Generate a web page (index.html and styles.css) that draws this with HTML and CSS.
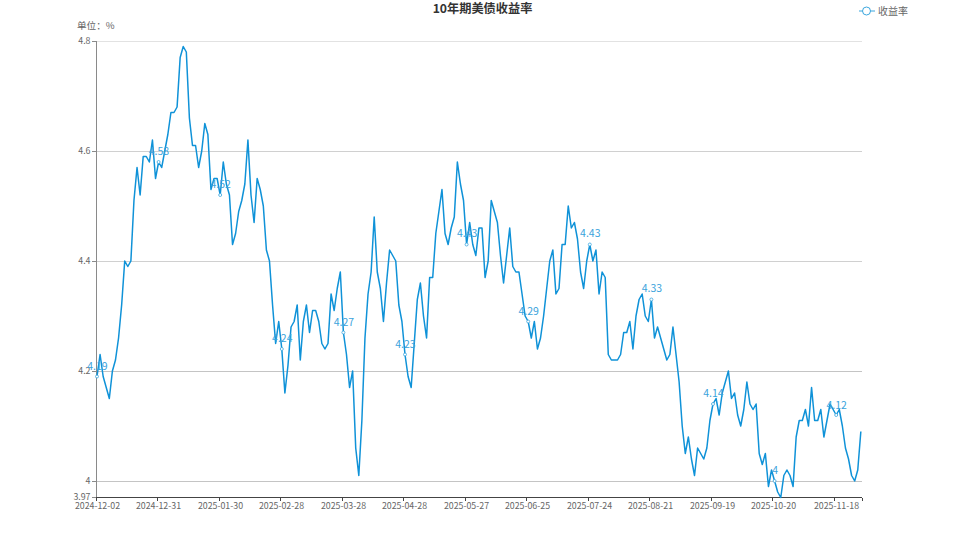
FILE: index.html
```html
<!DOCTYPE html>
<html lang="zh">
<head>
<meta charset="utf-8">
<title>10年期美债收益率</title>
<link rel="stylesheet" href="styles.css">
</head>
<body>
<main class="chart">
<svg class="plot" width="958" height="539" viewBox="0 0 958 539" xmlns="http://www.w3.org/2000/svg">
  <text class="title" x="482.5" y="13">10年期美债收益率</text>
  <text class="unit" x="77" y="28.5">单位：%</text>

  <g class="legend">
    <line class="legend-line" x1="859" y1="11" x2="875" y2="11"/>
    <circle class="legend-dot" cx="866.5" cy="11" r="4"/>
    <text class="legend-text" x="878" y="14.5">收益率</text>
  </g>

  <g class="grid">
    <line class="grid-top" x1="97" y1="41.5" x2="862" y2="41.5"/>
    <line x1="97" y1="151.5" x2="862" y2="151.5"/>
    <line x1="97" y1="261.5" x2="862" y2="261.5"/>
    <line class="grid-dark" x1="97" y1="371.5" x2="862" y2="371.5"/>
    <line class="grid-dark" x1="97" y1="481.5" x2="862" y2="481.5"/>
  </g>

  <g class="y-axis">
    <line x1="96.5" y1="41" x2="96.5" y2="498"/>
    <line x1="92" y1="41.5" x2="96" y2="41.5"/>
    <line x1="92" y1="151.5" x2="96" y2="151.5"/>
    <line x1="92" y1="261.5" x2="96" y2="261.5"/>
    <line x1="92" y1="371.5" x2="96" y2="371.5"/>
    <line x1="92" y1="481.5" x2="96" y2="481.5"/>
    <line x1="92" y1="497.5" x2="96" y2="497.5"/>
  </g>
  <g class="y-labels">
    <text x="90.5" y="44">4.8</text>
    <text x="90.5" y="154">4.6</text>
    <text x="90.5" y="264">4.4</text>
    <text x="90.5" y="374">4.2</text>
    <text x="90.5" y="484">4</text>
    <text x="90.5" y="500">3.97</text>
  </g>

  <g class="x-axis">
    <line x1="96" y1="497.5" x2="862" y2="497.5"/>
    <line x1="96.5" y1="498" x2="96.5" y2="501"/>
    <line x1="157.5" y1="498" x2="157.5" y2="501"/>
    <line x1="219.5" y1="498" x2="219.5" y2="501"/>
    <line x1="280.5" y1="498" x2="280.5" y2="501"/>
    <line x1="342.5" y1="498" x2="342.5" y2="501"/>
    <line x1="403.5" y1="498" x2="403.5" y2="501"/>
    <line x1="465.5" y1="498" x2="465.5" y2="501"/>
    <line x1="526.5" y1="498" x2="526.5" y2="501"/>
    <line x1="588.5" y1="498" x2="588.5" y2="501"/>
    <line x1="649.5" y1="498" x2="649.5" y2="501"/>
    <line x1="711.5" y1="498" x2="711.5" y2="501"/>
    <line x1="772.5" y1="498" x2="772.5" y2="501"/>
    <line x1="834.5" y1="498" x2="834.5" y2="501"/>
    <line x1="862.5" y1="498" x2="862.5" y2="501"/>
  </g>
  <g class="x-labels">
    <text x="97.5" y="509">2024-12-02</text>
    <text x="158.5" y="509">2024-12-31</text>
    <text x="220.5" y="509">2025-01-30</text>
    <text x="281.5" y="509">2025-02-28</text>
    <text x="343.5" y="509">2025-03-28</text>
    <text x="404.5" y="509">2025-04-28</text>
    <text x="466.5" y="509">2025-05-27</text>
    <text x="527.5" y="509">2025-06-25</text>
    <text x="589.5" y="509">2025-07-24</text>
    <text x="650.5" y="509">2025-08-21</text>
    <text x="712.5" y="509">2025-09-19</text>
    <text x="773.5" y="509">2025-10-20</text>
    <text x="836.5" y="509">2025-11-18</text>
  </g>

  <g transform="translate(97 2681) scale(3.08 -5.5)">
    <polyline class="series" points="0,419 1,423 2,419 3,417 4,415 5,420 6,422 7,426 8,432 9,440 10,439 11,440 12,451 13,457 14,452 15,459 16,459 17,458 18,462 19,455 20,458 21,457 22,460 23,463 24,467 25,467 26,468 27,477 28,479 29,478 30,466 31,461 32,461 33,457 34,460 35,465 36,463 37,453 38,455 39,455 40,452 41,458 42,454 43,452 44,443 45,445 46,449 47,451 48,454 49,462 50,452 51,447 52,455 53,453 54,450 55,442 56,440 57,432 58,425 59,429 60,424 61,416 62,421 63,428 64,429 65,432 66,422 67,429 68,432 69,427 70,431 71,431 72,429 73,425 74,424 75,425 76,434 77,431 78,435 79,438 80,427 81,423 82,417 83,420 84,406 85,401 86,411 87,426 88,434 89,438 90,448 91,438 92,435 93,429 94,436 95,442 96,441 97,440 98,432 99,429 100,423 101,419 102,417 103,425 104,433 105,436 106,430 107,426 108,437 109,437 110,445 111,449 112,453 113,445 114,443 115,446 116,448 117,458 118,454 119,451 120,443 121,447 122,443 123,441 124,446 125,446 126,437 127,440 128,451 129,449 130,447 131,441 132,436 133,441 134,446 135,439 136,438 137,438 138,434 139,430 140,429 141,426 142,429 143,424 144,426 145,430 146,435 147,440 148,442 149,434 150,435 151,443 152,443 153,450 154,446 155,447 156,444 157,438 158,435 159,440 160,443 161,440 162,442 163,434 164,438 165,437 166,423 167,422 168,422 169,422 170,423 171,427 172,427 173,429 174,424 175,430 176,433 177,434 178,430 179,429 180,433 181,426 182,428 183,426 184,424 185,422 186,423 187,428 188,423 189,418 190,410 191,405 192,408 193,404 194,401 195,406 196,405 197,404 198,406 199,411 200,414 201,415 202,412 203,416 204,418 205,420 206,415 207,416 208,412 209,410 210,413 211,418 212,414 213,413 214,414 215,405 216,403 217,405 218,399 219,402 220,400 221,398 222,397 223,401 224,402 225,401 226,399 227,408 228,411 229,411 230,413 231,410 232,417 233,411 234,411 235,413 236,408 237,411 238,414 239,413 240,412 241,413 242,410 243,406 244,404 245,401 246,400 247,402 248,409"/>
  </g>

  <g class="markers">
    <circle cx="97" cy="376.5" r="1.5"/>
    <circle cx="158.6" cy="162" r="1.5"/>
    <circle cx="220.2" cy="195" r="1.5"/>
    <circle cx="281.8" cy="349" r="1.5"/>
    <circle cx="343.4" cy="332.5" r="1.5"/>
    <circle cx="405" cy="354.5" r="1.5"/>
    <circle cx="466.6" cy="244.5" r="1.5"/>
    <circle cx="528.2" cy="321.5" r="1.5"/>
    <circle cx="589.8" cy="244.5" r="1.5"/>
    <circle cx="651.4" cy="299.5" r="1.5"/>
    <circle cx="713" cy="404" r="1.5"/>
    <circle cx="774.6" cy="481" r="1.5"/>
    <circle cx="836.2" cy="415" r="1.5"/>
  </g>
  <g class="point-labels">
    <text x="97.5" y="370">4.19</text>
    <text x="159" y="155">4.58</text>
    <text x="220.7" y="188">4.52</text>
    <text x="282.3" y="342">4.24</text>
    <text x="343.9" y="326">4.27</text>
    <text x="405.5" y="348">4.23</text>
    <text x="467.1" y="237">4.43</text>
    <text x="528.7" y="315">4.29</text>
    <text x="590.3" y="237">4.43</text>
    <text x="651.9" y="292">4.33</text>
    <text x="713.5" y="397">4.14</text>
    <text x="775.1" y="474">4</text>
    <text x="836.7" y="409">4.12</text>
  </g>
</svg>
</main>
</body>
</html>
```
FILE: styles.css
```css
html, body {
  margin: 0;
  padding: 0;
  background: #fff;
}

.chart {
  width: 958px;
  height: 539px;
  overflow: hidden;
}

.plot {
  display: block;
  font-family: "Noto Sans CJK SC", "Noto Sans", sans-serif;
}

.title {
  font-size: 12.2px;
  font-weight: 700;
  fill: #333;
  text-anchor: middle;
}

.unit {
  font-size: 9.6px;
  fill: #666;
}

.legend-line {
  stroke: #3aa6de;
  stroke-width: 1;
}

.legend-dot {
  fill: #fff;
  stroke: #3aa6de;
  stroke-width: 1;
}

.legend-text {
  font-size: 10px;
  fill: #666;
}

.grid line {
  stroke: #d0d0d0;
  stroke-width: 1;
}

.grid .grid-top {
  stroke: #e2e2e2;
}

.grid .grid-dark {
  stroke: #c4c4c4;
}

.y-axis line {
  stroke: #8a8a8a;
  stroke-width: 1;
}

.x-axis line {
  stroke: #444;
  stroke-width: 1;
}

.y-labels text {
  font-size: 8.8px;
  fill: #666;
  text-anchor: end;
}

.x-labels text {
  font-size: 8.8px;
  fill: #666;
  text-anchor: middle;
}

.series {
  fill: none;
  stroke: #0f92d8;
  stroke-width: 1.5;
  stroke-linejoin: round;
  vector-effect: non-scaling-stroke;
}

.markers circle {
  fill: #fff;
  stroke: #3aa6de;
  stroke-width: 0.8;
}

.point-labels text {
  font-size: 10.5px;
  fill: #3aa3dc;
  text-anchor: middle;
}
```
